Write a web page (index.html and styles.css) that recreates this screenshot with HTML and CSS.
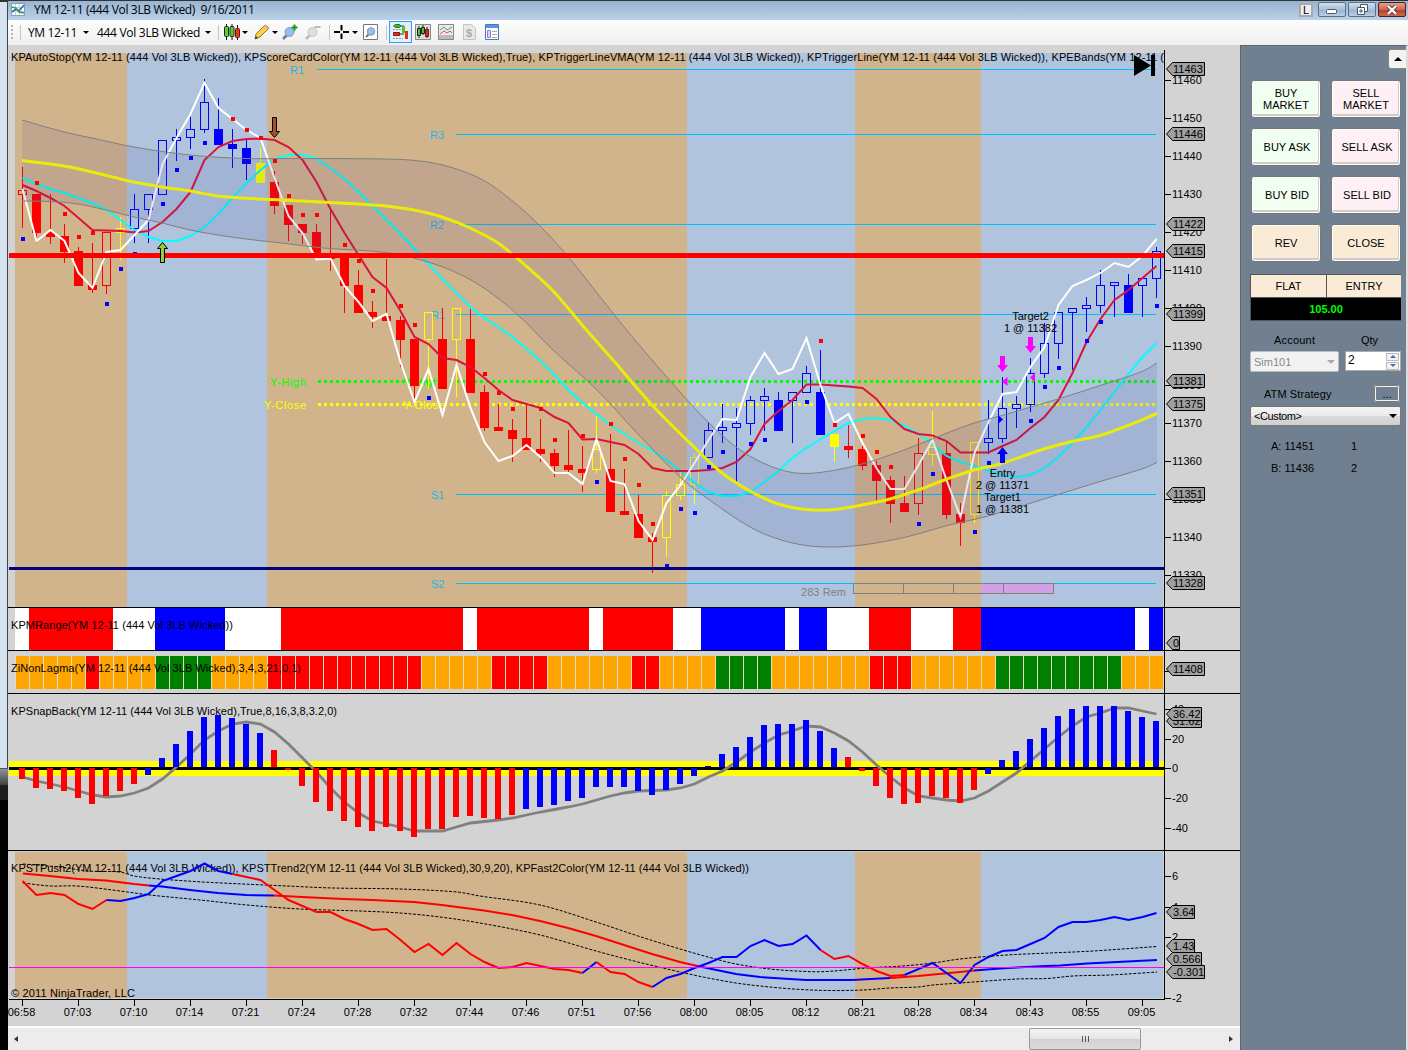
FILE: index.html
```html
<!DOCTYPE html>
<html lang="en">
<head>
  <meta charset="UTF-8" />
  <title>YM 12-11 (444 Vol 3LB Wicked)</title>
  <link rel="stylesheet" href="styles.css">
</head>
<body>

  <div class="desktop"><div class="behind"></div><div class="taskbar"></div></div>

  <div class="window">
    <header class="titlebar">
      <svg class="app-icon" width="14" height="14" viewBox="0 0 14 14">
        <rect x=".5" y=".5" width="13" height="12" fill="#fff" stroke="#8a9db5" />
        <path d="M4.5 1v11M8.5 1v11M1 4.5h12M1 8.5h12" stroke="#c3cedd" />
        <path d="M1 9l4-3 3 2 5-6" fill="none" stroke="#2868c8" stroke-width="1.6" />
        <path d="M1 4l4 1 3 4 5 1" fill="none" stroke="#2ba52b" stroke-width="1.4" />
      </svg>
      <span class="title">YM 12-11 (444 Vol 3LB Wicked)&nbsp; 9/16/2011</span>
      <span class="link-box">L</span>
      <span class="win-btn">
        <svg width="12" height="12" viewBox="0 0 12 12"><rect x=".5" y="5.5" width="10" height="4" rx="1" fill="#fff" stroke="#4b5566" /></svg>
      </span>
      <span class="win-btn restore">
        <svg width="13" height="12" viewBox="0 0 13 12"><path d="M4.500.5h7v7h-7z" fill="#fff" stroke="#4b5566" /><path d="M1.500 3.500h7v7h-7zM4 6h2v2H4z" fill="#fff" stroke="#4b5566" /></svg>
      </span>
      <span class="win-btn close">
        <svg width="12" height="10" viewBox="0 0 12 10"><path d="M2 1l8 8M10 1L2 9" stroke="#5a3a3a" stroke-width="4" /><path d="M2 1l8 8M10 1L2 9" stroke="#fff" stroke-width="2.400" /></svg>
      </span>
    </header>

    <div class="toolbar">
      <i class="grip"></i><i class="sep first"></i>
      <span class="pick instrument">YM 12-11</span><i class="arrow"></i>
      <span class="pick period">444 Vol 3LB Wicked</span><i class="arrow"></i>
      <i class="sep"></i>
      <svg width="16" height="16" viewBox="0 0 16 16">
        <path d="M2.500 0v16M8 0v16M13.500 1v15" stroke="#111" />
        <rect x=".5" y="2.500" width="4" height="10" rx="1" fill="#55d32b" stroke="#222" />
        <rect x="6" y="2.500" width="4" height="10" rx="1" fill="#55d32b" stroke="#222" />
        <rect x="11.500" y="4.500" width="4" height="9" rx="1" fill="#e03a2a" stroke="#711" />
      </svg><i class="arrow near"></i>
      <svg class="pencil" width="16" height="16" viewBox="0 0 16 16">
        <path d="M1 15l1-5L11 1l4 3-9 9z" fill="#fbd04a" stroke="#9a7420" />
        <path d="M10 2l1.500-1.500 4 3L14 5z" fill="#ef9a8a" /><path d="M1 15l.8-3 2 2z" fill="#333" />
      </svg><i class="arrow near"></i>
      <svg class="zoom-in" width="18" height="16" viewBox="0 0 18 16">
        <path d="M1 15l4-4" stroke="#777" stroke-width="2.500" /><circle cx="7.500" cy="8" r="4.500" fill="#8fc1f0" stroke="#8c9aa8" />
        <path d="M9.500 3.500h6M12.500.5v6" stroke="#159a15" stroke-width="2" />
      </svg>
      <svg class="zoom-out" width="18" height="16" viewBox="0 0 18 16">
        <path d="M1 15l4-4" stroke="#bbb" stroke-width="2.500" /><circle cx="7.500" cy="8" r="4.500" fill="#dedede" stroke="#c6c6c6" />
        <path d="M9.500 3h6" stroke="#bbb" stroke-width="2" />
      </svg>
      <i class="sep"></i>
      <svg class="cross" width="16" height="16" viewBox="0 0 16 16">
        <path d="M0 8h6M9 8h6M7.500 1v5.500M7.500 9.500V15" stroke="#000" stroke-width="2" />
      </svg><i class="arrow near"></i>
      <svg class="zoom-box" width="15" height="16" viewBox="0 0 15 16">
        <path d="M.5.5h14v15H.5z" fill="#fff" stroke="#777" />
        <path d="M3 13l3-3" stroke="#777" stroke-width="2" /><circle cx="8" cy="7.500" r="3.800" fill="#8fc1f0" stroke="#8c9aa8" />
      </svg>
      <i class="sep late"></i>
      <span class="active-tool">
        <svg width="17" height="16" viewBox="0 0 17 16">
          <path d="M3.500.500h4l1 1-1 2h-4l-2-1.500z" fill="#35c225" stroke="#187a10" />
          <path d="M1.500 8.500h6v3h-6z" fill="#e02d20" stroke="#8a120a" />
          <path d="M8 2h4M8 10h4" stroke="#333" /><path d="M10 2h3v7h-3z" fill="#45c92c" />
          <path d="M13 7h3v8h-3z" fill="#e02d20" /><path d="M1 5.500h8M1 14.500h10" stroke="#999" stroke-dasharray="2 1" />
        </svg>
      </span>
      <svg class="t1" width="16" height="16" viewBox="0 0 16 16">
        <path d="M.5.500h15v15H.5z" fill="#ddd" stroke="#888" /><path d="M4 2v12M8 1v10M12 3v11" stroke="#222" />
        <path d="M2.500 4.500h3v7h-3zM6.500 3.500h3v6h-3z" fill="#45c92c" stroke="#222" /><path d="M10.500 5.500h3v7h-3z" fill="#e02d20" stroke="#711" />
      </svg>
      <svg class="t2" width="16" height="16" viewBox="0 0 16 16">
        <path d="M.5.500h15v15H.5z" fill="#e9e9e9" stroke="#888" /><path d="M1 11h14v4H1z" fill="#bbb" />
        <path d="M2 6l4-3 3 3 5-3" fill="none" stroke="#3eac6a" /><path d="M2 10l4-3 3 2 3-2 2 2" fill="none" stroke="#e05050" />
      </svg>
      <svg class="t3" width="13" height="16" viewBox="0 0 13 16">
        <path d="M.5.5h8l4 4v11H.5z" fill="#e8e8e8" stroke="#c4c4c4" /><text x="3" y="13" class="dollar">$</text>
      </svg>
      <svg class="t4" width="14" height="16" viewBox="0 0 14 16">
        <path d="M.5.500h13v15H.5z" fill="#fff" stroke="#4a78b8" /><path d="M1 1h12v3H1z" fill="#5b93dc" />
        <path d="M2.500 6.500h3v7h-3z" fill="#dcd5fa" stroke="#8a78dc" /><path d="M7 7.500h5M7 10.500h5M7 13.500h5" stroke="#aaa" />
      </svg>
    </div>

    <div class="content">
      <main class="charts">
        <svg id="price" height="562" viewBox="8 45 1232 562"></svg>
        <svg id="range" height="43" viewBox="8 607 1232 43"></svg>
        <svg id="lagma" height="43" viewBox="8 650 1232 43"></svg>
        <svg id="snap" height="157" viewBox="8 693 1232 157"></svg>
        <svg id="push" height="149" viewBox="8 850 1232 149"></svg>
        <svg id="time" height="27" viewBox="8 999 1232 27"></svg>
        <div class="scrollbar">
          <i class="left"></i>
          <div class="thumb"><i></i><i></i><i></i></div>
          <i class="right"></i>
        </div>
      </main>

      <aside class="trader">
        <button class="collapse"><i></i></button>
        <div class="orders">
          <button class="buy">BUY<br>MARKET</button>
          <button class="sell">SELL<br>MARKET</button>
          <button class="buy one">BUY ASK</button>
          <button class="sell one">SELL ASK</button>
          <button class="buy one">BUY BID</button>
          <button class="sell one">SELL BID</button>
          <button class="flat">REV</button>
          <button class="flat">CLOSE</button>
        </div>
        <div class="position">
          <span>FLAT</span><span>ENTRY</span>
          <b>105.00</b>
        </div>
        <div class="labels"><span>Account</span><span>Qty</span></div>
        <div class="fields">
          <div class="account">Sim101<i></i></div>
          <div class="qty">2<span><i class="up"></i><i class="down"></i></span></div>
        </div>
        <div class="atm"><span>ATM Strategy</span><button>...</button></div>
        <div class="custom">&lt;Custom&gt;<i></i></div>
        <div class="quote"><span>A: 11451</span><span>1</span></div>
        <div class="quote"><span>B: 11436</span><span>2</span></div>
      </aside>
    </div>
  </div>

  <script src="chart.js"></script>
</body>
</html>
```
FILE: styles.css
```css
body {
  margin: 0;
  width: 1408px;
  height: 1050px;
  display: flex;
  overflow: hidden;
  background: #000;
  font-family: "Liberation Sans", Arial, sans-serif;
  font-size: 11px;
  color: #000;
}
svg {
  display: block;
  flex: none;
}
button {
  font: inherit;
  color: #000;
  padding: 0;
  margin: 0;
}

/* strip of desktop left of the window */
.desktop {
  width: 8px;
  flex: none;
}
.behind {
  height: 769px;
  box-sizing: border-box;
  background: #d6e4f1;
  border-right: 1px solid #444;
  border-top: 2px solid #333;
  border-bottom: 1px solid #555;
}
.taskbar {
  height: 31px;
  background: linear-gradient(#8d9494, #444 50%, #1c1e20 51%, #1c1e20);
}

.window {
  width: 1400px;
  height: 1050px;
  display: flex;
  flex-direction: column;
}
.titlebar {
  height: 20px;
  box-sizing: border-box;
  border-top: 1px solid #333;
  background: linear-gradient(#99b4d1, #b9d1ea);
  display: flex;
  align-items: center;
  padding: 0 2px 2px 3px;
}
.title {
  font-family: "Open Sans", "Noto Sans", sans-serif;
  font-size: 12px;
  letter-spacing: -0.33px;
  margin-left: 9px;
  flex: 1;
  white-space: nowrap;
}
.link-box {
  width: 10px;
  height: 10px;
  border: 2px solid #aaa;
  background: #f0f0f0;
  line-height: 11px;
  text-align: center;
  margin-right: 5px;
}
.win-btn {
  width: 26px;
  height: 13px;
  border: 1px solid #5d6f85;
  border-radius: 2px;
  background: linear-gradient(#cfdff0, #a7c0da 50%, #95b1cf 51%, #b9cfe5);
  display: flex;
  align-items: center;
  justify-content: center;
  margin-right: 2px;
}
.win-btn.close {
  margin-right: 0;
  border-color: #581818;
  background: linear-gradient(#e3a090, #cc6a54 50%, #b83d22 51%, #cb6850);
}

.toolbar {
  height: 25px;
  box-sizing: border-box;
  padding-bottom: 1px;
  background: linear-gradient(#fdfdfd, #f0f0f0);
  display: flex;
  align-items: center;
  font-family: "Open Sans", "Noto Sans", sans-serif;
  font-size: 12px;
}
.grip {
  width: 2px;
  height: 15px;
  margin-left: 3px;
  background: repeating-linear-gradient(#b5b5b5 0 2px, transparent 2px 4px);
}
.sep {
  width: 1px;
  height: 15px;
  background: #c5c5c5;
  margin: 0 5px 0 7px;
}
.sep.first {
  margin: 0 7px;
}
.sep.late {
  margin: 0 2px 0 8px;
}
.pick {
  white-space: nowrap;
}
.instrument {
  width: 50px;
  letter-spacing: -0.35px;
}
.period {
  width: 103px;
  letter-spacing: -0.3px;
  margin-left: 8px;
}
.arrow {
  border: 3px solid transparent;
  border-top-color: #000;
  border-bottom: 0;
  margin-left: 5px;
}
.arrow.near {
  margin-left: 2px;
}
.pencil {
  margin-left: 6px;
}
.zoom-in {
  margin-left: 4px;
}
.zoom-out {
  margin-left: 5px;
  margin-right: -1px;
}
.cross {
  margin-left: -1px;
}
.zoom-box {
  margin-left: 5px;
}
.active-tool {
  width: 21px;
  height: 20px;
  border: 1px solid #3399ff;
  background: #e3effb;
  display: flex;
  align-items: center;
  justify-content: center;
}
.t1 {
  margin-left: 3px;
}
.t2 {
  margin-left: 7px;
}
.t3, .t4 {
  margin-left: 9px;
}
.dollar {
  font: bold 11px "Liberation Sans", sans-serif;
  fill: #aaa;
}

.content {
  display: flex;
  height: 1005px;
}
.charts {
  width: 1232px;
  background: #d3d3d3;
}
.charts svg {
  width: 1232px;
  overflow: visible;
}
.charts rect, .charts .crisp {
  shape-rendering: crispEdges;
}
.charts text {
  font-size: 11px;
  white-space: pre;
}

.scrollbar {
  height: 24px;
  box-sizing: border-box;
  border-top: 2px solid #fafafa;
  background: #ececec;
  display: flex;
  align-items: center;
}
.scrollbar .left, .scrollbar .right {
  border: 3px solid transparent;
}
.scrollbar .left {
  border-right: 4px solid #333;
  border-left: 0;
  margin-left: 6px;
}
.scrollbar .right {
  border-left: 4px solid #333;
  border-right: 0;
  margin-left: 88px;
}
.thumb {
  width: 110px;
  height: 20px;
  border: 1px solid #989898;
  border-radius: 2px;
  background: linear-gradient(#f3f3f3, #e6e6e8 48%, #d2d2d4 50%, #dadadc);
  margin-left: 1011px;
  display: flex;
  align-items: center;
  justify-content: center;
  gap: 2px;
}
.thumb i {
  width: 1px;
  height: 6px;
  background: #555;
}

.trader {
  width: 168px;
  box-sizing: border-box;
  background: #708090;
  border-left: 1px solid #646464;
  border-top: 1px solid #646464;
  border-right: 2px solid #ddd;
  padding-left: 9px;
}
.collapse {
  display: block;
  width: 18px;
  height: 20px;
  margin: 3px 0 0 138px;
  border: 1px solid #888;
  border-right: 0;
  border-radius: 3px 0 0 3px;
  background: #f3f3f3;
}
.collapse i {
  display: block;
  width: 0;
  margin: auto;
  border: 4px solid transparent;
  border-bottom-color: #000;
  border-top: 0;
}
.orders {
  display: grid;
  grid-template-columns: 70px 70px;
  grid-auto-rows: 38px;
  gap: 10px;
  margin: 11px 0 0 1px;
}
.orders button {
  border: 1px solid #777;
  border-radius: 3px;
  box-shadow: inset 0 0 0 1px #fff, inset -1px -2px 0 1px #ccc;
  line-height: 12px;
}
.orders .one {
  padding-left: 2px;
}
.orders .buy {
  background: #f0fff0;
}
.orders .sell {
  background: #fff0f5;
}
.orders .flat {
  background: #faebd7;
}
.position {
  width: 151px;
  box-sizing: border-box;
  margin-top: 12px;
  display: grid;
  grid-template-columns: 75px 74px;
  grid-template-rows: 22px 22px;
  gap: 1px;
  border: 1px solid #555;
  background: #555;
  text-align: center;
  line-height: 23px;
}
.position span {
  background: #faebd7;
}
.position b {
  grid-column: 1 / 3;
  background: #000;
  color: #0f0;
}
.labels {
  display: flex;
  margin-top: 12px;
  line-height: 14px;
}
.labels span:first-child {
  width: 87px;
  padding-left: 24px;
  letter-spacing: .2px;
}
.fields {
  display: flex;
  margin-top: 4px;
}
.account {
  width: 81px;
  height: 19px;
  border: 1px solid #bbb;
  border-radius: 2px;
  background: #f2f2f2;
  color: #888;
  line-height: 20px;
  padding-left: 3px;
  padding-right: 3px;
  display: flex;
  align-items: center;
  justify-content: space-between;
}
.account i, .custom i {
  border: 4px solid transparent;
  border-top-color: #aaa;
  border-bottom: 0;
}
.qty {
  width: 51px;
  height: 18px;
  margin-left: 6px;
  border: 1px solid #aaa;
  background: #fff;
  font-size: 12px;
  padding-left: 2px;
  padding-right: 1px;
  line-height: 17px;
  display: flex;
  justify-content: space-between;
}
.qty span {
  width: 13px;
  display: flex;
  flex-direction: column;
  justify-content: center;
  gap: 1px;
}
.qty i {
  height: 6px;
  border: 1px solid #bbb;
  background: #f2f2f2;
}
.qty i::after {
  content: "";
  display: block;
  width: 0;
  margin: 1px auto;
  border: 3px solid transparent;
}
.qty .up::after {
  border-bottom-color: #4a66c0;
  border-top: 0;
}
.qty .down::after {
  border-top-color: #4a66c0;
  border-bottom: 0;
}
.atm {
  display: flex;
  align-items: center;
  margin-top: 13px;
  height: 17px;
}
.atm span {
  width: 110px;
  padding-left: 14px;
  letter-spacing: .1px;
}
.atm button {
  width: 26px;
  height: 17px;
  border: 2px solid #f3f3f3;
  outline: 1px solid #777;
  outline-offset: -1px;
  border-radius: 3px;
  background: #708090;
  line-height: 10px;
}
.custom {
  width: 143px;
  height: 18px;
  margin-top: 4px;
  border: 1px solid #777;
  border-radius: 2px;
  background: linear-gradient(#f4f4f4, #ebebeb 48%, #dadada 50%, #d0d0d0);
  display: flex;
  align-items: center;
  justify-content: space-between;
  padding: 0 3px;
  letter-spacing: -.4px;
}
.custom i {
  border-top-color: #000;
}
.quote {
  display: flex;
  margin-top: 13px;
  line-height: 14px;
  padding-left: 21px;
}
.quote + .quote {
  margin-top: 8px;
}
.quote span:first-child {
  width: 80px;
}
```
FILE: chart.js
```js
const STEP = 14;
const X0 = 22.5;
const TAN = '#d2b48c';
const BLUE = '#b0c4de';
const barX = i => X0 + STEP * i;

function add(svg, tag, attrs, text) {
  const el = document.createElementNS('http://www.w3.org/2000/svg', tag);
  for (const k in attrs) el.setAttribute(k, attrs[k]);
  if (text !== undefined) el.textContent = text;
  svg.appendChild(el);
  return el;
}
function rect(svg, x, y, w, h, fill) {
  return add(svg, 'rect', { x, y, width: w, height: h, fill });
}
function line(svg, x1, y1, x2, y2, stroke, width = 1, dash) {
  const el = add(svg, 'line', { x1, y1, x2, y2, stroke, 'stroke-width': width, class: 'crisp' });
  if (dash) el.setAttribute('stroke-dasharray', dash);
}
function label(svg, x, y, text, fill = '#000', length) {
  const el = add(svg, 'text', { x, y, fill }, text);
  if (length) el.setAttribute('textLength', length);
  return el;
}
function centered(svg, x, y, text) {
  label(svg, x, y, text).setAttribute('text-anchor', 'middle');
}
function poly(svg, pts, stroke, width, dash) {
  const el = add(svg, 'polyline', {
    points: pts.map(p => p.join()).join(' '), fill: 'none', stroke, 'stroke-width': width
  });
  if (dash) el.setAttribute('stroke-dasharray', dash);
}
const series = ys => ys.map((y, i) => [barX(i), y]);

// catmull-rom path through sparse points
function smooth(p) {
  let d = '';
  for (let i = 0; i < p.length - 1; i++) {
    const a = p[i - 1] || p[i], b = p[i], c = p[i + 1], e = p[i + 2] || c;
    const t = (c[0] - b[0]) / 3;
    const m1 = (c[1] - a[1]) / (c[0] - a[0]);
    const m2 = (e[1] - b[1]) / (e[0] - b[0]);
    d += `C${b[0] + t} ${b[1] + m1 * t} ${c[0] - t} ${c[1] - m2 * t} ${c[0]} ${c[1]}`;
  }
  return d;
}
function curve(svg, p, stroke, width, dash) {
  const el = add(svg, 'path', { d: `M${p[0]}` + smooth(p), fill: 'none', stroke, 'stroke-width': width });
  if (dash) el.setAttribute('stroke-dasharray', dash);
}

function zones(svg, y, h) {
  [[15, 127, TAN], [127, 267, BLUE], [267, 687, TAN], [687, 855, BLUE], [855, 981, TAN], [981, 1163, BLUE]]
    .forEach(([a, b, c]) => rect(svg, a, y, b - a, h, c));
}
function tick(svg, y, text) {
  line(svg, 1165, y + .5, 1171, y + .5, '#000');
  label(svg, 1172, y + 4, text);
}
function tag(svg, y, text, w) {
  add(svg, 'path', {
    d: `M1166.500 ${y}L1172.500 ${y - 6.500}H${1172 + w + .5}V${y + 6.500}H1172.500Z`, fill: '#a0a0a0', stroke: '#000'
  });
  label(svg, 1173, y + 4, text);
}

const price = document.getElementById('price');
const range = document.getElementById('range');
const lagma = document.getElementById('lagma');
const snap = document.getElementById('snap');
const push = document.getElementById('push');
const time = document.getElementById('time');

// ---------- price ----------
zones(price, 53, 554);

[[69, 'R1', 290, 317], [134, 'R3', 430, 456], [224, 'R2', 430, 456], [314, 'R1', 431, 456], [494, 'S1', 431, 456], [583, 'S2', 431, 456]]
  .forEach(([y, t, tx, x]) => {
    line(price, x, y + .5, 1156, y + .5, '#00bfff');
    label(price, tx, y + 5, t, '#1db4ea');
  });
label(price, 270, 386, 'Y-High', '#0f0', 36);
label(price, 403, 386, 'Y-High', '#0f0', 36);
label(price, 264, 409, 'Y-Close', '#ff0', 42);
label(price, 403, 409, 'Y-Close', '#ff0', 42);
line(price, 318, 381.5, 1156, 381.5, '#0f0', 3, '3 3');
line(price, 318, 404.5, 1156, 404.5, '#ff0', 3, '3 3');

// color + filled(1)/hollow(0), high, body top, body bottom, low
const candles = [
  'r0 167 190 194 228', 'r1 194 194 233 243', 'r1 194 232 237 244', 'r1 224 236 252 263', 'r1 247 251 286 286',
  'r1 243 285 290 293', 'r0 232 232 285 294', 'y0 217 228 232 260', 'b0 194 209 228 243', 'b0 194 194 209 243',
  'b0 140 140 194 194', 'b0 129 137 140 161', 'b0 117 129 137 149', 'b0 79 102 129 133', 'b1 98 129 145 145',
  'b1 129 144 149 168', 'b1 140 148 164 180', 'y1 148 163 183 183', 'r1 171 182 206 214', 'r1 205 205 225 241',
  'r1 224 224 233 244', 'r1 224 232 255 255', 'r1 209 255 259 271', 'r1 258 258 286 313', 'r1 270 285 313 313',
  'r1 301 312 317 328', 'r1 259 316 321 321', 'r1 316 320 340 367', 'r1 339 339 386 400', 'y0 312 312 339 389',
  'r1 308 339 389 389', 'y0 308 308 339 397', 'r1 309 339 393 393', 'r1 385 392 428 431', 'r1 404 427 431 431',
  'r1 419 430 439 462', 'r1 405 438 450 450', 'r1 419 449 454 462', 'r1 449 453 466 477', 'r1 430 465 470 472',
  'r1 446 469 473 492', 'y0 416 449 469 473', 'r1 434 469 512 512', 'r1 469 511 515 515', 'r1 495 514 538 538',
  'r1 533 537 542 573', 'y0 491 495 537 557', 'y0 472 484 495 500', 'y0 453 457 484 504', 'b0 423 430 457 457',
  'b0 404 427 430 443', 'b0 408 423 427 485', 'b0 396 400 423 435', 'b0 388 396 400 431', 'b1 392 400 431 431',
  'b0 392 392 400 443', 'b0 366 373 392 392', 'b1 350 392 435 435', 'y1 434 434 447 462', 'r1 425 446 450 458',
  'r1 446 449 466 470', 'r1 461 465 481 503', 'r1 476 480 504 523', 'r1 476 503 512 512', 'r0 438 453 503 515',
  'y0 411 447 454 466', 'r1 442 453 515 519', 'r1 503 514 523 546', 'y0 442 442 514 523', 'b0 400 438 442 454',
  'b0 377 408 438 443', 'b0 396 404 408 428', 'b0 358 373 404 412', 'b0 323 343 373 378', 'b0 312 312 343 359',
  'b0 308 308 312 370', 'b0 297 305 308 332', 'b0 270 285 305 313', 'b0 282 282 285 317', 'b1 274 285 313 313',
  'b0 278 278 285 317', 'b0 247 251 278 298'
];
const colors = { r: '#f00', b: '#00f', y: '#ff0' };
candles.forEach((row, i) => {
  const [type, hi, top, bot, low] = row.split(' ').map((v, k) => k ? Number(v) : v);
  const c = colors[type[0]], x = barX(i);
  if (hi < top) line(price, x, hi, x, top, c);
  if (low > bot) line(price, x, bot, x, low, c);
  if (type[1] === '1') {
    rect(price, x - 4.5, top, 9, bot - top, c);
  } else {
    rect(price, x - 4, top + .5, 8, bot - top, 'none').setAttribute('stroke', c);
  }
});

const cyan = series([178, 184, 189, 193, 198, 203, 210, 220, 230, 237, 241, 241, 236, 227, 214, 198, 183, 170, 159, 155,
  154.5, 159, 168, 179, 192, 206, 220, 234, 249, 264, 279, 293, 307, 318, 327, 337, 349, 361, 375, 390,
  403, 414, 425, 434, 443, 451, 460, 471, 483, 492, 496, 496, 492, 482, 471, 458, 448, 439, 431, 423,
  419, 418, 420, 426, 434, 444, 456, 462, 466, 471, 475, 477, 475, 468, 457, 443, 427, 410, 392, 374, 357, 343]);
const crimson = series([185, 191, 198, 206, 218, 230, 230.5, 231, 232.5, 231, 222, 209, 192, 160, 147, 141, 139, 138.5, 140, 147,
  160, 182, 209, 233, 255, 277, 288, 311, 337, 344, 358, 360, 367, 378, 390, 400, 404, 408, 417, 423,
  439.5, 439, 442, 445, 454, 468, 471, 471, 471, 470, 468, 462, 449, 424, 411, 400, 384.5, 384.5, 385.5, 386.5,
  388, 399, 417, 429, 434, 435.5, 441, 452.5, 452.5, 452.5, 446, 440, 428, 417, 400, 373, 342, 319, 300, 290, 278, 266]);
const white = series([189, 241, 230, 241, 273, 288, 252, 250, 235, 220, 164, 138, 114, 83, 108, 119, 130, 138, 178, 216,
  233, 259.5, 258.5, 286, 302, 321, 314, 362, 402, 369, 415, 365, 408, 442, 461, 456, 445, 457, 473, 473,
  484, 439, 481, 484, 521, 540, 503, 485, 463, 440, 419, 420, 377, 353, 374, 369, 338, 385, 423, 414,
  443, 468, 489, 489, 465, 440, 480, 517, 453, 422, 394, 392, 367, 347, 305, 286, 280, 273, 263, 267, 256, 239]);
const yellow = [[22, 160.5], [64, 166], [92, 172], [134, 182], [162, 187], [190, 191], [218, 196], [260, 199], [302, 201], [358, 204],
  [386, 206], [414, 210], [442, 217], [470, 228], [498, 243], [526, 266], [554, 292], [583, 326], [613, 360], [652, 405],
  [694, 447], [722, 473], [750, 491], [778, 504], [806, 509.5], [835, 509.5], [862, 505], [890, 499], [918, 490], [947, 479],
  [974, 470], [1000, 464], [1044, 449], [1072, 441.5], [1100, 435.5], [1128, 425.5], [1157, 413.5]];
const upper = [[22, 120], [64, 132], [92, 138], [134, 147], [190, 155], [246, 158.5], [302, 158.5], [386, 159], [420, 161], [450, 167],
  [483, 180], [510, 199], [538, 224], [565, 253], [590, 284], [620, 322], [652, 360], [680, 392], [708, 422], [736, 447],
  [763, 463], [792, 472.5], [820, 472.5], [862, 464], [904, 450], [947, 433], [974, 423], [1000, 416], [1058, 399],
  [1114, 381], [1142, 371.5], [1157, 363]];
const lower = [[22, 201], [50, 201.5], [78, 204], [106, 210], [134, 217], [162, 223], [190, 230], [218, 235], [246, 239], [290, 244],
  [323, 248], [390, 253], [428, 262], [456, 272.5], [484, 288], [517, 314], [553, 350], [597, 390], [638, 434], [680, 477],
  [708, 499], [750, 527], [778, 539], [806, 545.5], [834, 547], [862, 545], [890, 540.5], [918, 534], [947, 525.5],
  [988, 516], [1100, 481.5], [1142, 469], [1157, 462.5]];

poly(price, cyan, '#0ff', 2);
poly(price, crimson, '#dc143c', 2);
poly(price, white, '#fff', 2);
const back = lower.slice().reverse();
add(price, 'path', {
  d: `M${upper[0]}` + smooth(upper) + `L${back[0]}` + smooth(back) + 'Z', fill: '#483d8b', 'fill-opacity': .12
});
curve(price, yellow, '#ebeb0a', 3);
curve(price, upper, '#808080', 1);
curve(price, lower, '#808080', 1);

const redDots = '1 183,3 214,4 237,5 233,15 119,16 130,17 138,18 161,19 196,20 215,21 215,23 245,24 261,25 291,27 306,28 325,33 374,34 393,35 409,37 409,38 440,40 436,42 424,43 459,44 485,45 524,57 341,58 425,60 436,61 452,62 467';
const blueDots = '0 239,6 304,7 269,8 254,10 204,11 170,12 158,13 143,29 398,41 482,46 566,47 509,48 513,49 467,50 452,52 444,53 440,56 402,64 524,65 474,68 532,69 463,72 421,73 387,74 368,76 341,77 322,81 306';
[[redDots, '#f00'], [blueDots, '#00f']].forEach(([dots, c]) => {
  dots.split(',').forEach(d => {
    const [i, y] = d.split(' ').map(Number);
    rect(price, barX(i) - 1.5, y - 2, 4, 4, c);
  });
});

rect(price, 9, 253, 1156, 5, '#f00');
rect(price, 9, 567, 1156, 3, '#000080');

// volume remaining
rect(price, 981, 584, 72, 10, '#d1a0e6');
[853, 903, 953, 1003].forEach(x => rect(price, x + .5, 583.5, 50, 10, 'none').setAttribute('stroke', '#808080'));
label(price, 801, 596, '283 Rem', '#808080', 45);

// trade arrows and markers
add(price, 'path', { d: 'M272.500 117.500h4v14h3l-5 6-5-6h3z', fill: '#a0522d', stroke: '#000' });
add(price, 'path', { d: 'M160.500 262.500h4v-14h3l-5-6-5 6h3z', fill: '#9acd32', stroke: '#000' });
add(price, 'path', { d: 'M1000 356h5v9h3l-5.500 7-5.500-7h3z', fill: '#f0f' });
add(price, 'path', { d: 'M1028 337h5v9h3l-5.500 7-5.500-7h3z', fill: '#f0f' });
add(price, 'path', { d: 'M1000 463h5v-9h3l-5.500-7-5.500 7h3z', fill: '#00f' });
add(price, 'path', { d: 'M1002 381.500l5.500-4.500v9zM1030 377.500l5-4.500v9z', fill: '#f0f' });
add(price, 'path', { d: 'M1003 419.500l-5-4.500v9z', fill: '#00f' });
centered(price, 1030.5, 320, 'Target2');
centered(price, 1030.5, 332, '1 @ 11382');
centered(price, 1002.5, 477, 'Entry');
centered(price, 1002.5, 489, '2 @ 11371');
centered(price, 1002.5, 501, 'Target1');
centered(price, 1002.5, 513, '1 @ 11381');

label(price, 11, 61, 'KPAutoStop(YM 12-11 (444 Vol 3LB Wicked)), KPScoreCardColor(YM 12-11 (444 Vol 3LB Wicked),True), KPTriggerLineVMA(YM 12-11 (444 Vol 3LB Wicked)), KPTriggerLine(YM 12-11 (444 Vol 3LB Wicked)), KPEBands(YM 12-11 (', '#000', 1153);
add(price, 'path', { d: 'M1134 55l17 10.500-17 10.500zM1151 55h4v21h-4z', fill: '#000' });

line(price, 1164.5, 50, 1164.5, 607, '#000');
[80, 118, 156, 194, 232, 270, 308, 346, 385, 423, 461, 499, 537, 575]
  .forEach((y, i) => tick(price, y, 11460 - i * 10));
[[69, 11463], [134, 11446], [224, 11422], [251, 11415], [314, 11399], [381, 11381], [404, 11375], [494, 11351], [583, 11328]]
  .forEach(([y, t]) => tag(price, y, t, 32));

// ---------- KPMRange ----------
rect(range, 15, 608, 1148, 42, '#fff');
[[29, 113], [281, 463], [477, 589], [603, 673], [869, 911], [953, 981]].forEach(([a, b]) => rect(range, a, 608, b - a, 42, '#f00'));
[[155, 225], [701, 785], [799, 827], [981, 1135], [1149, 1163]].forEach(([a, b]) => rect(range, a, 608, b - a, 42, '#00f'));
line(range, 8, 607.5, 1240, 607.5, '#000');
line(range, 1164.5, 607, 1164.5, 650, '#000');
label(range, 11, 629, 'KPMRange(YM 12-11 (444 Vol 3LB Wicked))', '#000', 222);
tag(range, 643, '0', 7);

// ---------- ZiNonLagma ----------
const states = 'ooooorooooggggoooo' + 'r'.repeat(11) + 'ooooorrrroooooorroooogggg' + 'ooooooorrroooooo' + 'g'.repeat(9) + 'ooo';
rect(lagma, 15, 656, 1148, 33, '#e6dcc8');
[...states].forEach((s, i) => {
  rect(lagma, 16 + STEP * i, 656, 13, 33, { o: '#ffa500', r: '#f00', g: '#008000' }[s]);
});
line(lagma, 8, 650.5, 1240, 650.5, '#000');
line(lagma, 1164.5, 650, 1164.5, 693, '#000');
line(lagma, 1165, 671.5, 1171, 671.5, '#000');
label(lagma, 11, 672, 'ZiNonLagma(YM 12-11 (444 Vol 3LB Wicked),3,4,3,21,0,1)', '#000', 290);
tag(lagma, 669, '11408', 32);

// ---------- KPSnapBack ----------
rect(snap, 9, 761, 1155, 15, '#ff0');
rect(snap, 9, 767, 1155, 3, '#000');
poly(snap, series([777, 781, 784, 787, 791, 795, 797, 796, 793, 788, 779, 767, 754, 740, 731, 724, 722, 724, 732, 744,
  758, 772, 788, 802, 813, 821, 824, 827, 831, 831, 831, 827, 823, 821.5, 820, 818, 815, 812, 809.5, 807,
  804, 800, 796, 793, 791, 790.5, 790, 788, 784, 777, 771, 762, 752, 743, 735, 731, 726, 727, 733, 741,
  752, 765, 777, 788, 796, 798, 800, 801, 798, 791, 782, 773, 761, 749, 737, 726, 717, 713, 708, 708, 711, 714]), '#808080', 2.8);
const snapBars = [779, 788, 789, 791, 798, 804, 796, 791, 784, 775, 758, 744, 731, 717, 715, 718, 724, 733, 750, 770,
  786, 802, 811, 821, 827, 831, 827, 831, 837, 829, 829, 817, 816, 818, 819, 815, 809, 807, 805, 801,
  798, 787, 787, 787, 791, 795, 790, 784, 776, 766, 754, 747, 737, 725, 724, 724, 720, 731, 748, 757,
  771, 786, 798, 804, 803, 796, 798, 803, 790, 774, 760, 751, 739, 728, 716, 709, 706, 706, 706, 711, 717, 721];
snapBars.forEach((y, i) => {
  const red = i < 9 || (i > 17 && i < 36) || (i > 58 && i < 69);
  const up = y < 768;
  rect(snap, barX(i) - 3.5, up ? y : 768, 6, up ? 767 - y : y - 768, red ? '#f00' : '#00f');
});
line(snap, 8, 693.5, 1240, 693.5, '#000');
line(snap, 1164.5, 693, 1164.5, 850, '#000');
label(snap, 11, 715, 'KPSnapBack(YM 12-11 (444 Vol 3LB Wicked),True,8,16,3,8,3.2,0)', '#000', 326);
[[709, 40], [739, 20], [768, 0], [798, -20], [828, -40]].forEach(([y, t]) => tick(snap, y, t));
tag(snap, 721, '31.62', 29);
tag(snap, 714, '36.42', 29);

// ---------- KPSTPush2 ----------
zones(push, 852, 146);
label(push, 11, 872, 'KPSTPush2(YM 12-11 (444 Vol 3LB Wicked)), KPSTTrend2(YM 12-11 (444 Vol 3LB Wicked),30,9,20), KPFast2Color(YM 12-11 (444 Vol 3LB Wicked))', '#000', 738);
curve(push, [[23, 864], [60, 867], [88, 871], [120, 872], [134, 876], [160, 879], [203, 882], [243, 884], [287, 886], [333, 888], [400, 889],
  [457, 892], [480, 896], [540, 905], [596, 922], [638, 936], [680, 949], [708, 957], [736, 964], [770, 969], [806, 971.5],
  [827, 971.5], [867, 968], [903, 966], [933, 963], [960, 959], [1007, 955], [1050, 953], [1093, 951], [1157, 946.5]], '#000', 1, '3 1.5');
curve(push, [[23, 883], [50, 886], [77, 886], [120, 891], [150, 895], [200, 900], [247, 905], [300, 909], [360, 911], [400, 913], [440, 917],
  [480, 923], [540, 935], [596, 951], [638, 962], [680, 972], [708, 978], [736, 983], [760, 986], [793, 989], [827, 990.5],
  [863, 990], [890, 988], [918, 987], [933, 985], [960, 983], [1017, 979], [1047, 978.5], [1073, 976], [1110, 975], [1157, 972]], '#000', 1, '3 1.5');

const trend = [
  ['#f00', [[23, 873.5], [50, 876], [78, 879], [106, 880.5], [134, 884], [149, 885.5]]],
  ['#00f', [[149, 885.5], [162, 886.5], [190, 890], [218, 893], [246, 895], [274, 895.5]]],
  ['#f00', [[274, 895.5], [302, 897], [344, 899], [372, 900], [414, 902], [442, 905], [484, 910.5], [512, 915], [540, 921], [568, 928],
    [596, 936], [624, 945], [652, 954], [680, 962], [702, 967]]],
  ['#00f', [[702, 967], [736, 974], [760, 977], [806, 980], [852, 980], [890, 978]]],
  ['#f00', [[890, 978], [918, 976], [960, 972], [974, 970.5]]],
  ['#00f', [[974, 970.5], [1007, 968], [1046, 966], [1060, 965.5], [1087, 963.5], [1157, 960]]]
];
trend.forEach(([c, p]) => poly(push, p, c, 2));

const fast = series([881, 895, 893, 895, 904, 909, 900, 901, 898, 894, 881, 876, 871, 863.5, 871, 874, 877, 880, 890, 900,
  906, 912, 912, 919, 924, 930, 929, 940, 952, 944, 955, 943, 954, 962, 968, 967, 963, 966, 969, 970,
  973, 962, 972, 974, 982, 987, 978, 974, 968, 963, 957, 957, 946, 940, 946, 944, 935.5, 950, 959, 956,
  964, 971, 976, 975, 969, 963, 973, 983, 965, 957, 951, 950, 944, 938, 927, 922, 922, 920, 917, 920, 917, 913]);
[[0, 6, 'r'], [6, 15, 'b'], [15, 40, 'r'], [40, 41, 'b'], [41, 45, 'r'], [45, 57, 'b'], [57, 63, 'r'], [63, 81, 'b']]
  .forEach(([a, b, c]) => poly(push, fast.slice(a, b + 1), colors[c], 2));

line(push, 9, 967.5, 1164, 967.5, '#f0f');
line(push, 8, 850.5, 1240, 850.5, '#000', 1);
line(push, 1164.5, 850, 1164.5, 999, '#000');
label(push, 11, 997, '© 2011 NinjaTrader, LLC', '#000', 124);
[[876, 6], [907, 4], [937, 2]].forEach(([y, t]) => tick(push, y, t));
tag(push, 912, '3.64', 22);
tag(push, 946, '1.43', 22);
tag(push, 972, '-0.301', 32);
tag(push, 959, '0.566', 29);

// ---------- time axis ----------
line(time, 9, 999.5, 1165, 999.5, '#000');
tick(time, 998, -2);
'06:58 07:03 07:10 07:14 07:21 07:24 07:28 07:32 07:44 07:46 07:51 07:56 08:00 08:05 08:12 08:21 08:28 08:34 08:43 08:55 09:05'
  .split(' ').forEach((t, i) => {
    const x = X0 + 56 * i;
    line(time, x, 1000, x, 1006, '#000');
    centered(time, x - 1, 1016, t);
  });
```
